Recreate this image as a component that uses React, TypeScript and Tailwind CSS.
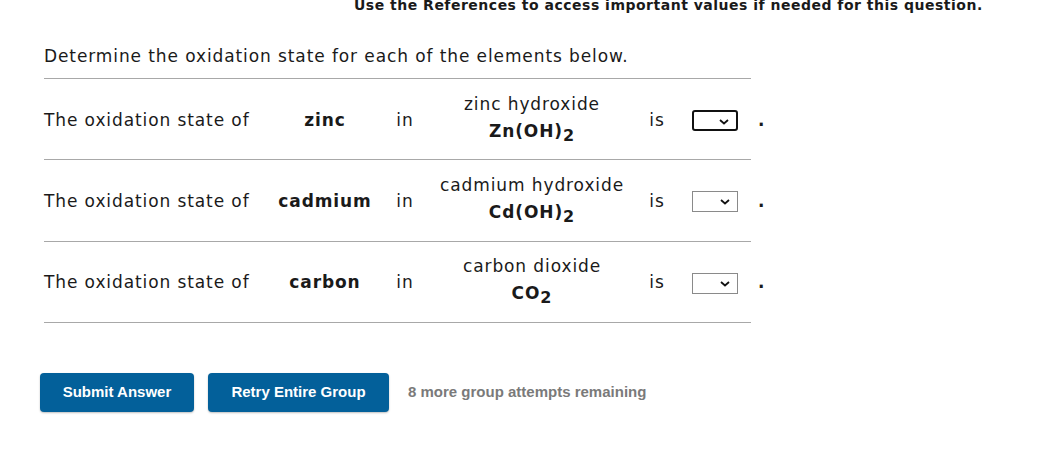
import React from "react";

type Row = {
  element: string;
  name: string;
  formula: React.ReactNode;
  focused?: boolean;
};

const sub = "relative top-[4px] align-baseline text-[16px]";

const rows: Row[] = [
  {
    element: "zinc",
    name: "zinc hydroxide",
    formula: (
      <>
        Zn(OH)<sub className={sub}>2</sub>
      </>
    ),
    focused: true,
  },
  {
    element: "cadmium",
    name: "cadmium hydroxide",
    formula: (
      <>
        Cd(OH)<sub className={sub}>2</sub>
      </>
    ),
  },
  {
    element: "carbon",
    name: "carbon dioxide",
    formula: (
      <>
        CO<sub className={sub}>2</sub>
      </>
    ),
  },
];

function Chevron() {
  return (
    <svg width="10" height="6" viewBox="0 0 10 6" className="absolute right-[7px] top-[7px]">
      <path d="M1 1l4 3.5L9 1" fill="none" stroke="#111" strokeWidth="1.8" />
    </svg>
  );
}

function Select({ focused }: { focused?: boolean }) {
  return (
    <div
      className={
        focused
          ? "relative h-[21px] w-[46px] rounded-[3px] border-2 border-[#111] bg-white"
          : "relative h-[21px] w-[46px] border border-[#8a8a8a] bg-white"
      }
    >
      <Chevron />
    </div>
  );
}

function QuestionRow({ row }: { row: Row }) {
  return (
    <div className="flex h-[81.3px] w-[707px] items-center border-b border-[#a8a8a8] pt-[3px] whitespace-nowrap text-[17px] tracking-[0.9px] text-[#1a1a1a]">
      <div className="w-[226px] shrink-0">The oxidation state of</div>
      <div className="w-[110px] shrink-0 text-center font-bold">{row.element}</div>
      <div className="w-[50px] shrink-0 text-center">in</div>
      <div className="-mt-[6px] flex w-[204px] shrink-0 flex-col items-center leading-[27px]">
        <div>{row.name}</div>
        <div className="font-bold">{row.formula}</div>
      </div>
      <div className="w-[46px] shrink-0 text-center">is</div>
      <div className="ml-[12px] shrink-0">
        <Select focused={row.focused} />
      </div>
      <div className="ml-[20px] shrink-0 font-bold">.</div>
    </div>
  );
}

export default function App() {
  return (
    <div className="h-[469px] w-[1043px] overflow-hidden bg-white font-['DejaVu_Sans',Verdana,sans-serif]">
      <div className="-mt-[3px] pl-[354px] text-[14px] font-bold leading-[16px] tracking-[0.5px] whitespace-nowrap text-[#1a1a1a]">
        Use the References to access important values if needed for this question.
      </div>

      <div className="pl-[44px] pt-[32px]">
        <p className="text-[17px] leading-[22px] tracking-[0.9px] text-[#1a1a1a]">
          Determine the oxidation state for each of the elements below.
        </p>
        <div className="mt-[11px] w-[707px] border-t border-[#a8a8a8]">
          {rows.map((r) => (
            <QuestionRow key={r.element} row={r} />
          ))}
        </div>
      </div>

      <div className="mt-[50px] flex items-center gap-[14px] pl-[40px] font-['Liberation_Sans',Arial,sans-serif] text-[15px] font-bold">
        <button className="h-[39px] w-[154px] rounded-[4px] bg-[#03609a] text-white shadow-[0_1px_2px_rgba(0,0,0,0.25)]">
          Submit Answer
        </button>
        <button className="h-[39px] w-[181px] rounded-[4px] bg-[#03609a] text-white shadow-[0_1px_2px_rgba(0,0,0,0.25)]">
          Retry Entire Group
        </button>
        <span className="ml-[5px] text-[#7a7a7a]">8 more group attempts remaining</span>
      </div>
    </div>
  );
}
